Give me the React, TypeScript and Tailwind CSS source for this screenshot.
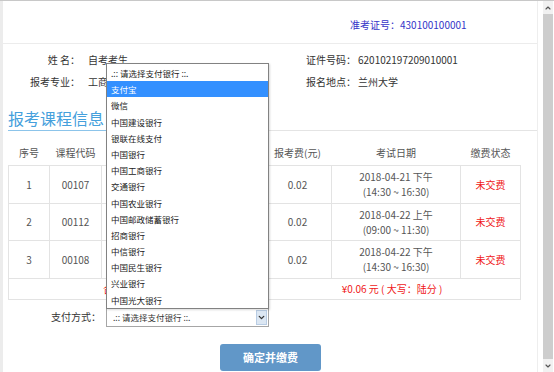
import { ChevronDown, ChevronUp } from "lucide-react";

const FONT = { fontFamily: '"Microsoft YaHei", "Noto Sans CJK SC", "Noto Sans", sans-serif' };

const BANKS = [
  ".:: 请选择支付银行 ::.",
  "支付宝",
  "微信",
  "中国建设银行",
  "银联在线支付",
  "中国银行",
  "中国工商银行",
  "交通银行",
  "中国农业银行",
  "中国邮政储蓄银行",
  "招商银行",
  "中信银行",
  "中国民生银行",
  "兴业银行",
  "中国光大银行",
];

// course name column sits under the open select list
const COURSES = [
  { no: 1, code: "00107", fee: "0.02", date: "2018-04-21 下午", time: "(14:30 ~ 16:30)", h: "h-[38px]" },
  { no: 2, code: "00112", fee: "0.02", date: "2018-04-22 上午", time: "(09:00 ~ 11:30)", h: "h-[37px]" },
  { no: 3, code: "00108", fee: "0.02", date: "2018-04-22 下午", time: "(14:30 ~ 16:30)", h: "h-[38px]" },
];

const cell = "border border-[#e3e3e3] p-0";

export default function App() {
  return (
    <div
      className="relative flex w-[554px] h-[372px] overflow-hidden bg-white border-t border-[#c8c8c8] text-[10px] leading-[14px] text-[#333]"
      style={FONT}
    >
      {/* page body */}
      <div className="w-[538px] h-full border-l-[3px] border-l-[#ececec] border-r border-r-[#eeeeee]">
        {/* header */}
        <div className="h-[43px] pt-[17px] pl-[347px] border-b border-[#ececec] text-[#3434c8] whitespace-nowrap">
          准考证号：430100100001
        </div>

        {/* student info */}
        <div className="pt-[5px] leading-[22px] whitespace-nowrap">
          <div className="flex">
            <div className="w-[77px] text-right">姓&nbsp;名：</div>
            <div className="w-[226px] pl-[8px]">自考考生</div>
            <div className="w-[52px]">证件号码：</div>
            <div>620102197209010001</div>
          </div>
          <div className="flex">
            <div className="w-[77px] text-right">报考专业：</div>
            <div className="w-[226px] pl-[8px]">工商企业管理</div>
            <div className="w-[52px]">报名地点：</div>
            <div>兰州大学</div>
          </div>
        </div>

        {/* section title */}
        <div className="mx-[5px] mt-[15px] w-[529px] border-b border-[#e4e4e4]">
          <div className="inline-block -mb-px pb-[2px] pr-[3px] border-b border-[#8cc4ea] text-[16px] leading-[20px] text-[#45a0dc]">
            报考课程信息
          </div>
        </div>

        {/* course table */}
        <table className="ml-[5px] mt-[9px] border-collapse text-center text-[#555] leading-[15px]">
          <thead>
            <tr className="h-[25px]">
              <th className="w-[41px] p-0 font-normal">序号</th>
              <th className="w-[52px] p-0 font-normal">课程代码</th>
              <th className="w-[162px] p-0 font-normal">课程名称</th>
              <th className="w-[68px] p-0 font-normal">报考费(元)</th>
              <th className="w-[129px] p-0 font-normal">考试日期</th>
              <th className="w-[60px] p-0 font-normal">缴费状态</th>
            </tr>
          </thead>
          <tbody>
            {COURSES.map((c) => (
              <tr key={c.no} className={c.h}>
                <td className={cell}>{c.no}</td>
                <td className={cell}>{c.code}</td>
                <td className={cell}></td>
                <td className={cell}>{c.fee}</td>
                <td className={cell}>
                  {c.date}
                  <br />
                  {c.time}
                </td>
                <td className={`${cell} text-[#f01818]`}>未交费</td>
              </tr>
            ))}
            <tr className="h-[21px] text-[#f01818]">
              <td colSpan={3} className={`${cell} text-left pl-[94px]`}>合计：</td>
              <td colSpan={3} className={cell}>¥0.06 元 ( 大写：陆分 )</td>
            </tr>
          </tbody>
        </table>

        {/* payment method */}
        <div className="flex items-center mt-[8px] h-[19px]">
          <div className="w-[103px] pr-[5px] text-right">支付方式：</div>
          <div className="flex items-center w-[163px] h-[19px] border border-[#a6a6a6] bg-white text-[8.5px]">
            <span className="flex-1 pl-[6px]">.:: 请选择支付银行 ::.</span>
            <span className="flex items-center justify-center w-[11px] h-[15px] mr-[1px] bg-[#dce7f3] border border-[#b9cde4]">
              <ChevronDown size={9} strokeWidth={3.5} className="text-[#333]" />
            </span>
          </div>
        </div>

        {/* submit */}
        <div className="flex mt-[17px] pl-[217px]">
          <button className="w-[101px] h-[27px] rounded-[3px] bg-[#6197c8] text-white text-[11px] font-bold">
            确定并缴费
          </button>
        </div>
      </div>

      {/* scrollbar */}
      <div className="ml-[5px] w-[10px] h-full flex flex-col items-center bg-[#f1f1f1]">
        <div className="h-[13px] flex items-center justify-center">
          <ChevronUp size={8} strokeWidth={3.5} className="text-[#555]" />
        </div>
        <div className="flex-1 w-full bg-[#cdcdcd]" />
        <div className="h-[13px] flex items-center justify-center">
          <ChevronDown size={8} strokeWidth={3.5} className="text-[#555]" />
        </div>
      </div>

      {/* open select list */}
      <div className="absolute left-[106px] top-[62px] w-[163px] border border-[#828282] bg-white pt-[1px] text-[8.5px] shadow-[1px_1px_2px_rgba(0,0,0,0.15)]">
        {BANKS.map((b, i) => (
          <div
            key={b}
            className={
              i === 1
                ? "h-[16.2px] leading-[16.2px] pl-[4px] bg-[#3390ff] text-white"
                : "h-[16.2px] leading-[16.2px] pl-[4px] text-[#222]"
            }
          >
            {b}
          </div>
        ))}
      </div>
    </div>
  );
}
